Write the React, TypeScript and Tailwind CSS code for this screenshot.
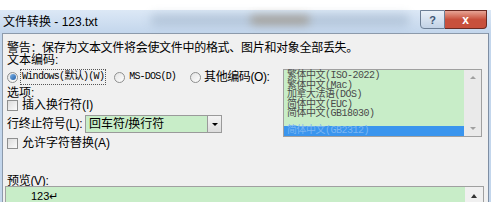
import React from 'react';

const ui = { fontFamily: '"Liberation Sans", "Noto Sans CJK SC", sans-serif' };
const bitmap = { fontFamily: '"Liberation Mono", "Noto Sans CJK SC", monospace' };

const encodings = [
  '繁体中文(ISO-2022)',
  '繁体中文(Mac)',
  '加拿大法语(DOS)',
  '简体中文(EUC)',
  '简体中文(GB18030)',
];

const Radio: React.FC<{ checked?: boolean }> = ({ checked }) => (
  <span className="w-[11px] h-[11px] rounded-full border border-[#8e8f8f] bg-gradient-to-br from-[#e4e4e4] to-[#fdfdfd] flex items-center justify-center shrink-0">
    {checked && <span className="w-[6px] h-[6px] rounded-full bg-gradient-to-br from-[#7fb3e6] to-[#1f5fa8]" />}
  </span>
);

const Checkbox: React.FC = () => (
  <span className="w-[11px] h-[11px] border border-[#8e8f8f] bg-gradient-to-br from-[#dcdcdc] to-[#fbfbfb] shrink-0" />
);

export default function App() {
  return (
    <div className="w-[491px] h-[202px] overflow-hidden bg-white text-black text-[12px] leading-[12px] whitespace-nowrap" style={ui}>
      <div className="h-[10px]" />
      {/* title bar */}
      <div className="relative h-[23px] flex items-center bg-gradient-to-b from-[#dce8f6] to-[#c3d6ec]">
        <span className="absolute left-[150px] top-[4px] w-[260px] h-[12px] rounded-full bg-[#8aa0b8] opacity-40 blur-[5px]" />
        <span className="absolute left-[250px] top-[5px] w-[60px] h-[10px] rounded-full bg-[#8a6a40] opacity-40 blur-[4px]" />
        <span className="relative pl-[3px] text-[12px]">文件转换 - 123.txt</span>
        <div className="absolute right-[4px] top-0 flex">
          <div className="w-[25px] h-[19px] border border-[#6d7f96] rounded-bl-[4px] bg-gradient-to-b from-[#e9f0f8] to-[#c2d2e6] flex items-center justify-center text-[11px] text-[#3d5574] font-bold">?</div>
          <div className="w-[42px] h-[19px] border border-l-0 border-[#6a2a22] rounded-br-[4px] bg-gradient-to-b from-[#e6a495] via-[#c8503c] to-[#c8503c] flex items-center justify-center text-white font-bold text-[12px]">x</div>
        </div>
      </div>
      {/* client */}
      <div className="flex h-[169px]">
        <div className="w-[3px] bg-[#c3d6ec]" />
        <div className="flex-1 bg-[#f0f0f0] border-l border-t border-[#8c9aab] pl-[4px] pr-[4px] pt-[8px] flex flex-col">
          <div className="h-[12px] tracking-[-0.3px]">警告：保存为文本文件将会使文件中的格式、图片和对象全部丢失。</div>
          <div className="h-[12px]">文本编码:</div>
          <div className="flex mt-[3px]">
            <div className="w-[276px] flex flex-col">
              <div className="flex items-center h-[16px]">
                <Radio checked />
                <span className="ml-[2px] h-[16px] px-[1px] border border-dotted border-[#555] flex items-center text-[10px] tracking-[-0.7px]" style={bitmap}>Windows(默认)(W)</span>
                <span className="ml-[8px]"><Radio /></span>
                <span className="ml-[4px] text-[10px] tracking-[-0.8px]" style={bitmap}>MS-DOS(D)</span>
                <span className="ml-[14px]"><Radio /></span>
                <span className="ml-[3px] tracking-[-0.4px]">其他编码(O):</span>
              </div>
              <div className="mt-[2px] h-[12px]">选项:</div>
              <div className="flex items-center mt-0 h-[12px]">
                <Checkbox />
                <span className="ml-[4px]">插入换行符(I)</span>
              </div>
              <div className="flex items-center mt-[4px] h-[18px]">
                <span className="w-[78px] tracking-[-0.3px]">行终止符号(L):</span>
                <div className="w-[137px] h-[18px] border border-[#9a9a9a] bg-[#c8edc8] flex items-center">
                  <span className="flex-1 pl-[3px]">回车符/换行符</span>
                  <span className="w-[14px] h-[16px] border-l border-[#9a9a9a] bg-gradient-to-b from-[#f4f4f4] to-[#dcdcdc] flex items-center justify-center">
                    <span className="w-0 h-0 border-l-[3px] border-r-[3px] border-t-[3px] border-l-transparent border-r-transparent border-t-black" />
                  </span>
                </div>
              </div>
              <div className="flex items-center mt-[4px] h-[12px]">
                <Checkbox />
                <span className="ml-[4px]">允许字符替换(A)</span>
              </div>
            </div>
            {/* encoding list */}
            <div className="w-[199px] h-[68px] border border-[#a0a0a0] bg-[#c8edc8] flex">
              <div className="flex-1 flex flex-col pt-[1px] text-[#4a4a4a] text-[10px] leading-[9.6px]" style={bitmap}>
                {encodings.map((e) => (
                  <div key={e} className="pl-[3px] h-[9.6px] tracking-[-0.5px]">{e}</div>
                ))}
                <div className="mt-[7px] pl-[3px] h-[11px] bg-[#3a95ee] text-[#7cb6f2] tracking-[-0.5px]">简体中文(GB2312)</div>
              </div>
              <div className="w-[17px] bg-[#eaeaea] flex flex-col justify-between items-center py-[6px]">
                <span className="w-0 h-0 border-l-[3px] border-r-[3px] border-b-[3px] border-l-transparent border-r-transparent border-b-[#a0a0a0]" />
                <span className="w-0 h-0 border-l-[3px] border-r-[3px] border-t-[3px] border-l-transparent border-r-transparent border-t-[#a0a0a0]" />
              </div>
            </div>
          </div>
          <div className="mt-[26px] h-[11px] tracking-[-0.3px]">预览(V):</div>
          <div className="w-[479px] h-[20px] border border-[#a0a0a0] bg-[#c8edc8] flex -ml-[2px]">
            <div className="flex-1 pl-[25px] pt-[3px] text-[11px]">123↵</div>
            <div className="w-[18px] bg-[#f0f0f0] flex justify-center pt-[7px]">
              <span className="w-0 h-0 border-l-[3px] border-r-[3px] border-b-[4px] border-l-transparent border-r-transparent border-b-[#333]" />
            </div>
          </div>
        </div>
        <div className="w-[4px] border-l border-[#7e8ea3] bg-[#c3d6ec]" />
      </div>
    </div>
  );
}
